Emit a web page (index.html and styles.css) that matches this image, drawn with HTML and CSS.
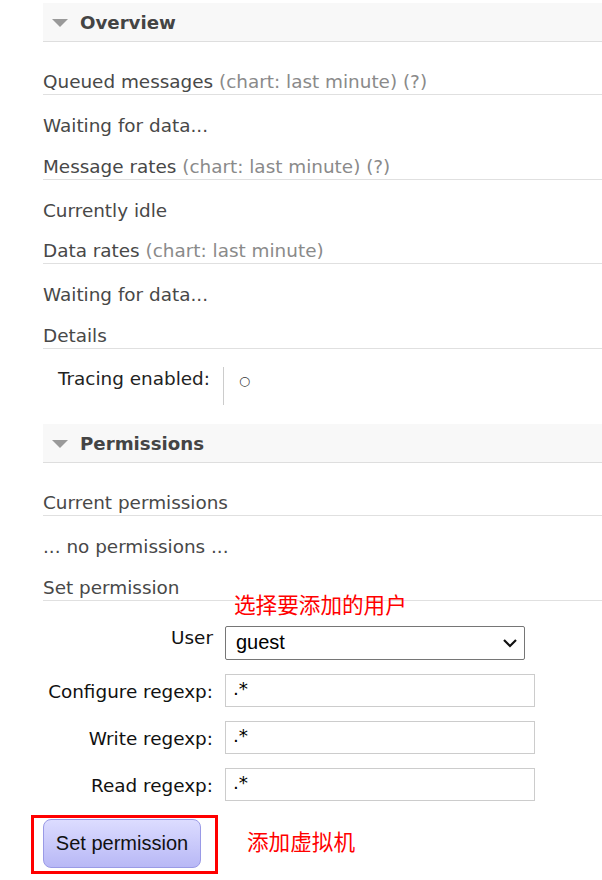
FILE: index.html
```html
<!DOCTYPE html>
<html>
<head>
<meta charset="utf-8">
<link rel="stylesheet" href="styles.css">
</head>
<body>
<div class="page">
  <div class="section">
    <div class="section-head"><span class="tri"></span><h2>Overview</h2></div>
    <h3>Queued messages <span class="muted">(chart: last minute) (?)</span></h3>
    <p>Waiting for data...</p>
    <h3>Message rates <span class="muted">(chart: last minute) (?)</span></h3>
    <p>Currently idle</p>
    <h3>Data rates <span class="muted">(chart: last minute)</span></h3>
    <p>Waiting for data...</p>
    <h3>Details</h3>
    <table class="facts">
      <tr><th>Tracing enabled:</th><td>○</td></tr>
    </table>
  </div>

  <div class="section">
    <div class="section-head"><span class="tri"></span><h2>Permissions</h2></div>
    <h3>Current permissions</h3>
    <p>... no permissions ...</p>
    <h3>Set permission</h3>
    <div class="form-wrap">
      <span class="note note-user">选择要添加的用户</span>
      <table class="form">
        <tr>
          <th class="th-user">User</th>
          <td>
            <div class="select">
              <span>guest</span>
              <svg width="16" height="10" viewBox="0 0 16 10"><path d="M2 2 L8 8 L14 2" fill="none" stroke="#111" stroke-width="2.2"/></svg>
            </div>
          </td>
        </tr>
        <tr><th>Configure regexp:</th><td><div class="input">.*</div></td></tr>
        <tr><th>Write regexp:</th><td><div class="input">.*</div></td></tr>
        <tr><th>Read regexp:</th><td><div class="input">.*</div></td></tr>
      </table>
      <div class="submit-row">
        <div class="btn-outline"><button class="btn">Set permission</button></div>
        <span class="note note-btn">添加虚拟机</span>
      </div>
    </div>
  </div>
</div>
</body>
</html>
```

FILE: styles.css
```css
html, body {
  margin: 0;
  padding: 0;
  background: #fff;
}
.page {
  padding: 3px 0 0 43px;
  font-family: "DejaVu Sans", Verdana, sans-serif;
  font-size: 18.4px;
  color: #484848;
}
.section-head {
  display: flex;
  align-items: center;
  height: 38px;
  background: #f8f8f8;
  border-bottom: 1px solid #dedede;
  padding-left: 9px;
}
.tri {
  width: 0;
  height: 0;
  border-left: 8px solid transparent;
  border-right: 8px solid transparent;
  border-top: 8px solid #9a9a9a;
  margin-right: 12px;
  margin-top: 2px;
}
.section-head h2 {
  margin: 0;
  font-size: 18.2px;
  font-weight: bold;
  color: #444;
  line-height: 22px;
  padding-top: 2px;
}
h3 {
  margin: 30px 0 0;
  font-size: 18.4px;
  font-weight: normal;
  line-height: 20px;
  padding-bottom: 2px;
  border-bottom: 1px solid #e0e0e0;
}
p {
  margin: 20px 0 0;
  line-height: 21px;
}
p + h3 { margin-top: 20.7px; }
.muted { color: #8a8a8a; }

.facts {
  border-collapse: collapse;
  margin: 18px 0 19px 10px;
}
.facts th {
  font-weight: normal;
  color: #222;
  padding: 0 13px 0 5px;
  vertical-align: top;
  height: 38px;
  line-height: 24px;
  text-align: right;
}
.facts td {
  border-left: 1px solid #ccc;
  padding: 0 0 0 15px;
  vertical-align: top;
  line-height: 28px;
  font-size: 12.5px;
  color: #333;
}

.form-wrap {
  position: relative;
  padding-top: 25px;
}
.note {
  font-family: "Noto Sans CJK SC", sans-serif;
  color: #ff0000;
  font-size: 21.6px;
  line-height: 24px;
}
.note-user {
  position: absolute;
  left: 191px;
  top: -9px;
}
.form {
  border-collapse: separate;
  border-spacing: 0 14px;
  margin: -14px 0 0 0;
}
.form th {
  width: 170px;
  text-align: right;
  font-weight: normal;
  color: #111;
  padding: 2px 12px 0 0;
  vertical-align: middle;
  white-space: nowrap;
}
.form th.th-user { vertical-align: top; padding-top: 2px; line-height: 20px; }
.form td { padding: 0; }
.select {
  box-sizing: border-box;
  width: 300px;
  height: 34px;
  border: 1px solid #767676;
  border-radius: 2px;
  display: flex;
  align-items: center;
  justify-content: space-between;
  padding: 0 6px 0 10px;
  font-family: "Liberation Sans", Arial, sans-serif;
  font-size: 20px;
  color: #000;
}
.input {
  box-sizing: border-box;
  width: 310px;
  height: 33px;
  border: 1px solid #ccc;
  padding: 0 7px;
  line-height: 28px;
  color: #000;
}
.submit-row {
  display: flex;
  align-items: center;
  margin-top: 0;
}
.btn-outline {
  margin-left: -12px;
  border: 3px solid #ff0000;
  padding: 1px 14px 3px 9px;
}
.btn {
  box-sizing: border-box;
  width: 158px;
  height: 49px;
  border: 1px solid #9a9ae6;
  border-radius: 8px;
  background: linear-gradient(#dcdcff, #b8b8f6);
  font-family: "Liberation Sans", Arial, sans-serif;
  font-size: 20px;
  color: #111;
  padding: 0;
}
.note-btn {
  margin-left: 29px;
  margin-top: -6px;
}
```
